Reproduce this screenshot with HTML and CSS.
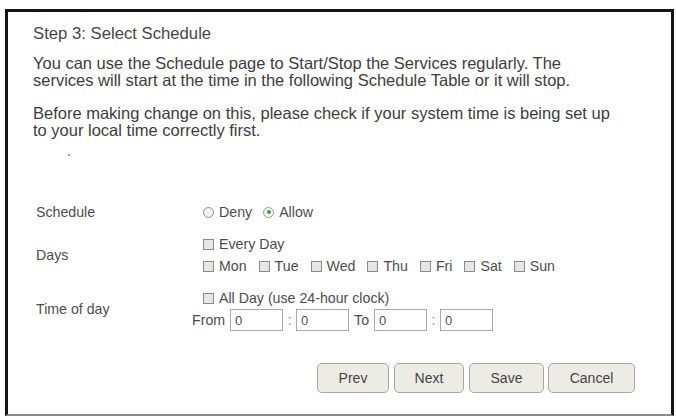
FILE: index.html
```html
<!DOCTYPE html>
<html>
<head>
<meta charset="utf-8">
<link rel="stylesheet" href="styles.css">
</head>
<body>
<div class="frame">
  <div class="title">Step 3: Select Schedule</div>
  <p class="para">You can use the Schedule page to Start/Stop the Services regularly. The<br>services will start at the time in the following Schedule Table or it will stop.</p>
  <p class="para para2">Before making change on this, please check if your system time is being set up<br>to your local time correctly first.</p>
  <div class="dot-line"><span class="dot"></span></div>
  <div class="form">
    <div class="row">
      <div class="label">Schedule</div>
      <div class="value">
        <div class="line">
          <span class="radio"></span><span class="opt">Deny</span>
          <span class="radio on"></span><span class="opt">Allow</span>
        </div>
      </div>
    </div>
    <div class="row">
      <div class="label">Days</div>
      <div class="value">
        <div class="line"><span class="check"></span><span class="opt">Every Day</span></div>
        <div class="line">
          <span class="check"></span><span class="opt">Mon</span>
          <span class="check"></span><span class="opt">Tue</span>
          <span class="check"></span><span class="opt">Wed</span>
          <span class="check"></span><span class="opt">Thu</span>
          <span class="check"></span><span class="opt">Fri</span>
          <span class="check"></span><span class="opt">Sat</span>
          <span class="check"></span><span class="opt">Sun</span>
        </div>
      </div>
    </div>
    <div class="row">
      <div class="label">Time of day</div>
      <div class="value">
        <div class="line"><span class="check"></span><span class="opt">All Day (use 24-hour clock)</span></div>
        <div class="line times">
          <span class="word">From</span><span class="field">0</span>
          <span class="colon">:</span><span class="field">0</span>
          <span class="word to">To</span><span class="field">0</span>
          <span class="colon">:</span><span class="field">0</span>
        </div>
      </div>
    </div>
  </div>
  <div class="buttons">
    <span class="btn b-prev">Prev</span>
    <span class="btn b-next">Next</span>
    <span class="btn b-save">Save</span>
    <span class="btn b-cancel">Cancel</span>
  </div>
</div>
</body>
</html>
```
FILE: styles.css
```css
html, body {
  margin: 0;
  padding: 0;
  background: #fff;
}
body {
  font-family: "Liberation Sans", Arial, sans-serif;
  color: #3a3a3a;
  width: 676px;
  height: 417px;
  overflow: hidden;
}
.frame {
  box-sizing: border-box;
  margin: 9px 0 0 5px;
  width: 669px;
  height: 407px;
  border-top: 3px solid #151515;
  border-left: 3px solid #151515;
  border-right: 3px solid #151515;
  border-bottom: 2px solid #8a8a8a;
  padding: 13px 0 0 25px;
}
.title {
  font-size: 16.7px;
  line-height: 17px;
  color: #474747;
}
.para {
  margin: 13px 0 0 0;
  font-size: 16.5px;
  line-height: 17px;
  color: #3d3d3d;
  white-space: nowrap;
}
.para2 {
  margin-top: 16px;
}
.dot-line {
  height: 14px;
  padding-left: 35px;
  padding-top: 15px;
  box-sizing: border-box;
}
.dot {
  display: block;
  width: 2px;
  height: 2px;
  background: #999;
}
.form {
  margin: 47px 0 0 3px;
  font-size: 14.2px;
  color: #4d4d4d;
}
.row {
  display: flex;
  align-items: center;
  margin-bottom: 10px;
}
.label {
  width: 160px;
  flex: none;
}
.value {
  display: flex;
  flex-direction: column;
}
.line {
  display: flex;
  align-items: center;
  height: 22px;
}
.radio {
  box-sizing: border-box;
  width: 11px;
  height: 11px;
  border-radius: 50%;
  border: 1px solid #8e8e8e;
  background: #f4f4f4;
  margin: 0 5px 0 7px;
  position: relative;
}
.radio.on {
  margin-left: 11px;
  border-color: #7fb08a;
}
.radio.on::after {
  content: "";
  position: absolute;
  left: 2.5px;
  top: 2.5px;
  width: 4px;
  height: 4px;
  border-radius: 50%;
  background: #3f9a5a;
}
.check {
  box-sizing: border-box;
  width: 11px;
  height: 11px;
  border: 1px solid #8a8a8a;
  background: #e6e6e6;
  margin: 0 5px 0 12px;
}
.line > .check:first-child,
.line > .radio:first-child {
  margin-left: 7px;
}
.times {
  margin-left: -4px;
}
.word {
  margin-right: 5px;
}
.word.to {
  margin-left: 5px;
  margin-right: 5px;
}
.field {
  box-sizing: border-box;
  width: 53px;
  height: 22px;
  border: 1px solid #a9a9a9;
  padding: 3px 0 0 4px;
  line-height: 15px;
  font-size: 13px;
}
.colon {
  width: 13px;
  text-align: center;
  color: #888;
}
.buttons {
  display: flex;
  justify-content: flex-end;
  margin: 32px 36px 0 0;
}
.btn {
  box-sizing: border-box;
  height: 30px;
  border: 1px solid #a8a8a0;
  border-radius: 5px;
  background: #ecece4;
  color: #444;
  font-size: 14px;
  display: flex;
  align-items: center;
  justify-content: center;
  margin-left: 5px;
}
.b-prev { width: 72px; }
.b-next { width: 70px; }
.b-save { width: 75px; }
.b-cancel { width: 87px; margin-left: 4px; }
```
